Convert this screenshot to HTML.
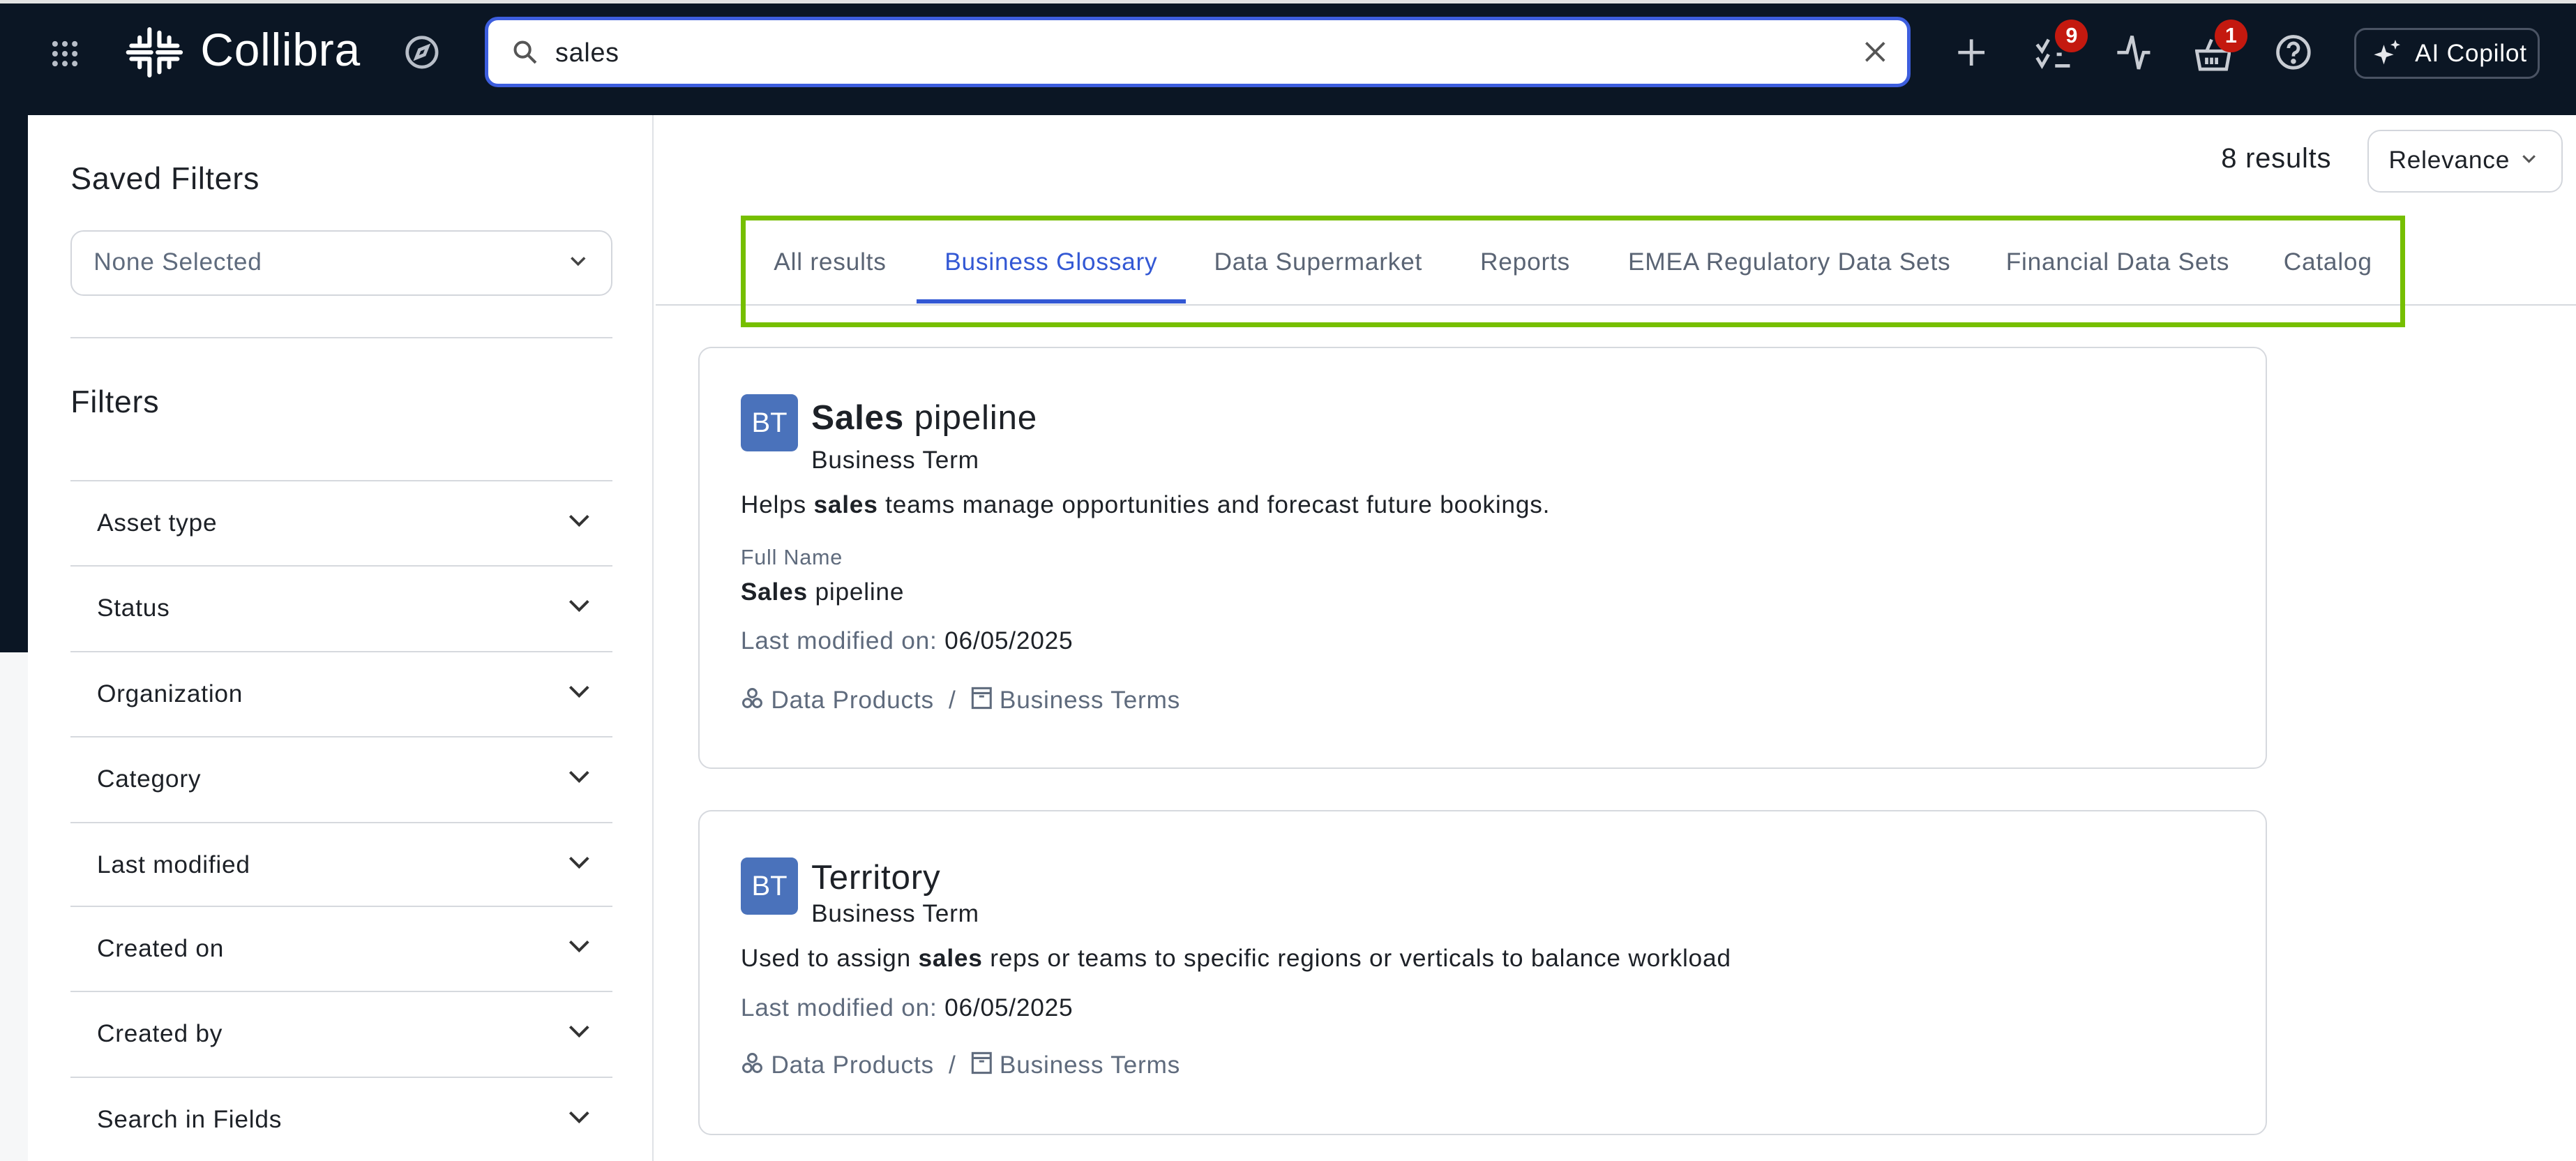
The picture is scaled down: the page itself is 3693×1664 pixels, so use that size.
<!DOCTYPE html>
<html><head><meta charset="utf-8">
<style>
*{box-sizing:border-box;margin:0;padding:0}
html,body{width:3693px;height:1664px;overflow:hidden;background:#fff}
#z{zoom:2.3552;width:1568px;height:707px;position:relative;font-family:"Liberation Sans",sans-serif;color:#1d2127;background:#fff;letter-spacing:0.02em}
.a{position:absolute;white-space:nowrap}
.top{position:absolute;left:0;top:2px;width:1568px;height:68px;background:#0b1624}
.gs{position:absolute;left:0;top:0;width:1568px;height:2px;background:#e3e3e3}
.leftdark{position:absolute;left:0;top:70px;width:17px;height:327px;background:#0b1624}
.leftlight{position:absolute;left:0;top:397px;width:17px;height:310px;background:#f6f7f8}
.side{position:absolute;left:17px;top:70px;width:381px;height:640px;background:#fff;border-top-left-radius:10px;border-right:1px solid #dfe2e6}
.row{position:absolute;left:43px;width:330px;height:52px;border-top:1px solid #d6d9de;font-size:15px}
.row span{position:absolute;left:16px;top:17px}
.row svg{position:absolute;right:14px;top:20px}
.tab{position:absolute;top:151px;font-size:15px;color:#5a6474}
.card{position:absolute;left:425px;width:955px;background:#fff;border:1px solid #d6d9de;border-radius:8px}
.bt{position:absolute;left:25px;width:35px;height:35px;background:#4a72bb;border-radius:4px;color:#fff;font-size:17px;text-align:center;line-height:35px;letter-spacing:0}
.g{color:#5f6b7d}
.badge{position:absolute;width:20px;height:20px;border-radius:10px;background:#c4190f;color:#fff;font-size:13px;font-weight:bold;text-align:center;line-height:20px;letter-spacing:0}
</style></head><body><div id="z">
<div class="gs"></div>
<div class="top"></div>
<div class="leftdark"></div><div class="leftlight"></div>
<svg class="a" style="left:31px;top:24px" width="17" height="17" viewBox="0 0 17 17" fill="#b8bec8"><circle cx="2.5" cy="2.5" r="1.7"/><circle cx="8.5" cy="2.5" r="1.7"/><circle cx="14.5" cy="2.5" r="1.7"/><circle cx="2.5" cy="8.5" r="1.7"/><circle cx="8.5" cy="8.5" r="1.7"/><circle cx="14.5" cy="8.5" r="1.7"/><circle cx="2.5" cy="14.5" r="1.7"/><circle cx="8.5" cy="14.5" r="1.7"/><circle cx="14.5" cy="14.5" r="1.7"/></svg>
<svg class="a" style="left:76px;top:15px" width="36" height="34" viewBox="0 0 36 34" stroke="#fff" stroke-width="2.6" stroke-linecap="round" fill="none"><path d="M15 3v10M21 5v8M9 8v3M27 8v3M15 21v10M21 21v8M9 23v3M27 23v3M4 13h10M22 13h10M4 21h10M22 21h10M2 17h14M20 17h14"/></svg>
<div class="a" style="left:122px;top:14px;font-size:28px;color:#fff">Collibra</div>
<svg class="a" style="left:246px;top:21px" width="22" height="22" viewBox="0 0 22 22" fill="none" stroke="#b8bec8" stroke-width="2"><circle cx="11" cy="11" r="9"/><path d="M14.5 7.5 12.5 12.5 7.5 14.5 9.5 9.5z"/></svg>
<div class="a" style="left:295px;top:10px;width:868px;height:43px;background:#fff;border:2.5px solid #3d5ede;border-radius:8px"></div>
<svg class="a" style="left:312px;top:24px" width="15" height="15" viewBox="0 0 15 15" fill="none" stroke="#555" stroke-width="1.7"><circle cx="6" cy="6" r="4.5"/><path d="M9.5 9.5 14 14"/></svg>
<div class="a" style="left:338px;top:23px;font-size:16px">sales</div>
<svg class="a" style="left:1135px;top:25px" width="13" height="13" viewBox="0 0 13 13" stroke="#555" stroke-width="1.6"><path d="M1 1 12 12M12 1 1 12"/></svg>
<svg class="a" style="left:1191px;top:23px" width="18" height="18" viewBox="0 0 18 18" stroke="#c8ccd3" stroke-width="2"><path d="M9 1v16M1 9h16"/></svg>
<svg class="a" style="left:1239px;top:22px" width="22" height="20" viewBox="0 0 22 20" fill="none" stroke="#c8ccd3" stroke-width="2"><path d="M1 5l3 4 4-7M1 13l3 5 4-7M12 18h9M13 11h3"/></svg>
<div class="badge" style="left:1251px;top:12px">9</div>
<svg class="a" style="left:1288px;top:20px" width="22" height="24" viewBox="0 0 22 24" fill="none" stroke="#c8ccd3" stroke-width="2"><path d="M1 12h6l3-10 4 20 3-10h4"/></svg>
<svg class="a" style="left:1336px;top:22px" width="22" height="22" viewBox="0 0 22 22" fill="none" stroke="#c8ccd3" stroke-width="2"><path d="M1 9h20l-2 11H3zM7 9l3-7M10 13v4M13 13v4M7 13v4"/></svg>
<div class="badge" style="left:1348px;top:12px">1</div>
<svg class="a" style="left:1385px;top:21px" width="22" height="22" viewBox="0 0 22 22" fill="none" stroke="#c8ccd3" stroke-width="2"><circle cx="11" cy="11" r="9.5"/><path d="M8 8.5a3 3 0 1 1 4 2.8c-1 .5-1 1.2-1 2.2"/><circle cx="11" cy="16.5" r=".6" fill="#c8ccd3"/></svg>
<div class="a" style="left:1433px;top:17px;width:113px;height:31px;border:1.5px solid #4a5363;border-radius:7px"></div>
<svg class="a" style="left:1444px;top:24px" width="18" height="18" viewBox="0 0 18 18" fill="#e6e8ec"><path d="M7 3l1.5 4.5L13 9l-4.5 1.5L7 15l-1.5-4.5L1 9l4.5-1.5z"/><path d="M14 0l.8 2.2L17 3l-2.2.8L14 6l-.8-2.2L11 3l2.2-.8z"/></svg>
<div class="a" style="left:1470px;top:24px;font-size:15px;color:#fff">AI Copilot</div>
<div class="side"></div>
<div class="a" style="left:43px;top:98px;font-size:19px">Saved Filters</div>
<div class="a" style="left:43px;top:140px;width:330px;height:40px;border:1px solid #d3d6dc;border-radius:8px"></div>
<div class="a g" style="left:57px;top:151px;font-size:15px">None Selected</div>
<svg class="a" style="left:347px;top:156px" width="10" height="7" viewBox="0 0 10 7" fill="none" stroke="#444" stroke-width="1.5"><path d="M1 1l4 4 4-4"/></svg>
<div class="a" style="left:43px;top:205px;width:330px;height:1px;background:#d6d9de"></div>
<div class="a" style="left:43px;top:234px;font-size:19px">Filters</div>
<div class="row" style="top:292px"><span>Asset type</span><svg width="13" height="8" viewBox="0 0 13 8" fill="none" stroke="#333" stroke-width="1.7"><path d="M1 1l5.5 5.5L12 1"/></svg></div>
<div class="row" style="top:344px"><span>Status</span><svg width="13" height="8" viewBox="0 0 13 8" fill="none" stroke="#333" stroke-width="1.7"><path d="M1 1l5.5 5.5L12 1"/></svg></div>
<div class="row" style="top:396px"><span>Organization</span><svg width="13" height="8" viewBox="0 0 13 8" fill="none" stroke="#333" stroke-width="1.7"><path d="M1 1l5.5 5.5L12 1"/></svg></div>
<div class="row" style="top:448px"><span>Category</span><svg width="13" height="8" viewBox="0 0 13 8" fill="none" stroke="#333" stroke-width="1.7"><path d="M1 1l5.5 5.5L12 1"/></svg></div>
<div class="row" style="top:500px"><span>Last modified</span><svg width="13" height="8" viewBox="0 0 13 8" fill="none" stroke="#333" stroke-width="1.7"><path d="M1 1l5.5 5.5L12 1"/></svg></div>
<div class="row" style="top:551px"><span>Created on</span><svg width="13" height="8" viewBox="0 0 13 8" fill="none" stroke="#333" stroke-width="1.7"><path d="M1 1l5.5 5.5L12 1"/></svg></div>
<div class="row" style="top:603px"><span>Created by</span><svg width="13" height="8" viewBox="0 0 13 8" fill="none" stroke="#333" stroke-width="1.7"><path d="M1 1l5.5 5.5L12 1"/></svg></div>
<div class="row" style="top:655px"><span>Search in Fields</span><svg width="13" height="8" viewBox="0 0 13 8" fill="none" stroke="#333" stroke-width="1.7"><path d="M1 1l5.5 5.5L12 1"/></svg></div>
<div class="a" style="left:1352px;top:87px;font-size:17px">8 results</div>
<div class="a" style="left:1441px;top:79px;width:119px;height:38px;border:1px solid #d3d6dc;border-radius:8px"></div>
<div class="a" style="left:1454px;top:89px;font-size:15px">Relevance</div>
<svg class="a" style="left:1535px;top:94px" width="9" height="6" viewBox="0 0 9 6" fill="none" stroke="#555" stroke-width="1.3"><path d="M1 1l3.5 3.5L8 1"/></svg>
<div class="a" style="left:399px;top:185px;width:1169px;height:1px;background:#d6d9de"></div>
<div class="tab" style="left:471px">All results</div>
<div class="tab" style="left:575px;color:#3358d4">Business Glossary</div>
<div class="a" style="left:558px;top:182px;width:164px;height:2.5px;background:#3358d4"></div>
<div class="tab" style="left:739px">Data Supermarket</div>
<div class="tab" style="left:901px">Reports</div>
<div class="tab" style="left:991px">EMEA Regulatory Data Sets</div>
<div class="tab" style="left:1221px">Financial Data Sets</div>
<div class="tab" style="left:1390px">Catalog</div>
<div class="a" style="left:451px;top:131px;width:1013px;height:68px;border:3px solid #76bf00"></div>
<div class="card" style="top:211px;height:257px">
<div class="bt" style="top:28px">BT</div>
<div class="a" style="left:68px;top:30px;font-size:21px"><b>Sales</b> pipeline</div>
<div class="a" style="left:68px;top:60px;font-size:15px">Business Term</div>
<div class="a" style="left:25px;top:87px;font-size:15px">Helps <b>sales</b> teams manage opportunities and forecast future bookings.</div>
<div class="a g" style="left:25px;top:120px;font-size:13px">Full Name</div>
<div class="a" style="left:25px;top:140px;font-size:15px"><b>Sales</b> pipeline</div>
<div class="a" style="left:25px;top:170px;font-size:15px"><span class="g">Last modified on:</span> 06/05/2025</div>
<div class="a g" style="left:25px;top:206px;font-size:15px"><svg width="14" height="14" viewBox="0 0 14 14" fill="none" stroke="#5f6b7d" stroke-width="1.3" style="vertical-align:-1px"><circle cx="7" cy="4" r="2.5"/><circle cx="4" cy="10" r="2.5"/><circle cx="10" cy="10" r="2.5"/></svg> Data Products &nbsp;/ &nbsp;<svg width="13" height="14" viewBox="0 0 13 14" fill="none" stroke="#5f6b7d" stroke-width="1.3" style="vertical-align:-1px"><rect x="1" y="1" width="11" height="12"/><path d="M1 4h11M5 6h3"/></svg> Business Terms</div>
</div>
<div class="card" style="top:493px;height:198px">
<div class="bt" style="top:28px">BT</div>
<div class="a" style="left:68px;top:28px;font-size:21px">Territory</div>
<div class="a" style="left:68px;top:54px;font-size:15px">Business Term</div>
<div class="a" style="left:25px;top:81px;font-size:15px">Used to assign <b>sales</b> reps or teams to specific regions or verticals to balance workload</div>
<div class="a" style="left:25px;top:111px;font-size:15px"><span class="g">Last modified on:</span> 06/05/2025</div>
<div class="a g" style="left:25px;top:146px;font-size:15px"><svg width="14" height="14" viewBox="0 0 14 14" fill="none" stroke="#5f6b7d" stroke-width="1.3" style="vertical-align:-1px"><circle cx="7" cy="4" r="2.5"/><circle cx="4" cy="10" r="2.5"/><circle cx="10" cy="10" r="2.5"/></svg> Data Products &nbsp;/ &nbsp;<svg width="13" height="14" viewBox="0 0 13 14" fill="none" stroke="#5f6b7d" stroke-width="1.3" style="vertical-align:-1px"><rect x="1" y="1" width="11" height="12"/><path d="M1 4h11M5 6h3"/></svg> Business Terms</div>
</div>
</div></body></html>
